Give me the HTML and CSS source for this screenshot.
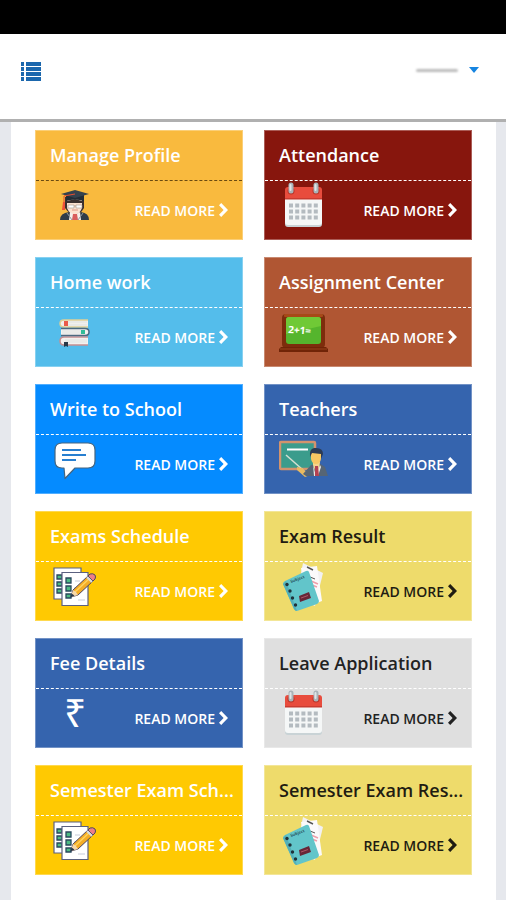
FILE: index.html
```html
<!doctype html>
<html lang="en">

<head>
    <meta charset="utf-8">
    <meta name="viewport" content="width=device-width, initial-scale=1">
    <title>School Dashboard</title>
    <link rel="stylesheet" href="styles.css">
</head>

<body>
    <!-- shared icons -->
    <svg class="sprite" aria-hidden="true">
        <symbol id="chevron" viewBox="0 0 9 14">
            <path d="M0 2.3 2.2 0 9 7 2.2 14 0 11.7 4.6 7z" fill="currentColor"/>
        </symbol>
        <symbol id="calendar" viewBox="0 0 50 50">
            <rect x="6" y="9" width="37" height="37" rx="3" fill="#c9d3d6"/>
            <rect x="6" y="9" width="37" height="35" rx="3" fill="#f5f7f7"/>
            <path d="M6 18V9q0-3 3-3h31q3 0 3 3v9z" fill="#e84c3d"/>
            <path d="M6 17h37v1.500H6z" fill="#c93c31"/>
            <circle cx="12" cy="10" r="3.500" fill="#b93429"/>
            <circle cx="37" cy="10" r="3.500" fill="#b93429"/>
            <path d="M12 4v6M37 4v6" stroke="#a9b3b8" stroke-width="5" stroke-linecap="round"/>
            <path d="M11.500 4v5M36.500 4v5" stroke="#dfe5e7" stroke-width="2" stroke-linecap="round"/>
            <g stroke="#b4bbc0" stroke-width="4" stroke-dasharray="4 2.200">
                <path d="M10 24.500h29M10 30.500h29M10 36.500h29"/>
            </g>
        </symbol>
        <symbol id="checklist" viewBox="0 0 50 50">
            <path d="M4 6h27v31H4z" fill="#fff" stroke="#5b6180" stroke-width="1.200"/>
            <g fill="#4dbb83" stroke="#28485c" stroke-width="1.300">
                <path d="M7 13h5v4H7zM7 20h5v4H7zM7 27h5v4H7z"/>
            </g>
            <path d="M12 10.500h26v33H12z" fill="#fff" stroke="#5b6180" stroke-width="1.200"/>
            <g fill="#4dbb83" stroke="#28485c" stroke-width="1.300">
                <path d="M16 16h5v5h-5zM16 24h5v5h-5zM16 32h5v4h-5z"/>
            </g>
            <path d="M25 19h5M24 26h4M28 38h7" stroke="#c7cbd8"/>
            <path d="M21 35l2-7L38 14l5 5-15 14z" fill="#f5ad25" stroke="#4d4660"/>
            <path d="M25 30 40 16" stroke="#ffd35f" stroke-width="1.500"/>
            <path d="M38 14l2-2q3-1 5 1 1 2 0 4l-2 2z" fill="#ed7e86" stroke="#4d4660"/>
            <path d="M37 15l5 5" stroke="#d6dce5" stroke-width="2"/>
            <path d="M21 35l2-7q3 1 5 5z" fill="#f8d8a8"/>
            <path d="M20.500 35.500l1-4 3 2z" fill="#26364c"/>
        </symbol>
        <symbol id="notebook" viewBox="0 0 50 50">
            <path d="M24 1l20 10-8 33-19-8z" fill="#f2f1f3"/>
            <path d="M22 6l16-2 5 35-13 5z" fill="#fbfafb"/>
            <path d="M28 5l6 3" stroke="#555" stroke-width="1.500"/>
            <path d="M31 15l5 2" stroke="#555"/>
            <path d="M32 19l7 3M33 23l5 2" stroke="#ee9da9" stroke-width="1.500"/>
            <path d="M6 19 27 9q2-1 3 1l10 29q0 2-2 3l-20 7q-2 0-3-2L4 22q0-2 2-3z" fill="#62c5ca"/>
            <path d="M4 22l3-3 11 30q-2 0-3-2z" fill="#53b0b8"/>
            <text class="notebook-label" x="12" y="21" transform="rotate(-20 12 21)">Subject</text>
            <path d="M20 34l10-4 2 6-11 4z" fill="#682537"/>
            <path d="M22 36l7-2.500" stroke="#ad5567"/>
            <g fill="#20323a">
                <circle cx="8" cy="22.500" r="1.700"/>
                <circle cx="11" cy="29" r="1.700"/>
                <circle cx="13.500" cy="36" r="1.700"/>
                <circle cx="16.500" cy="43" r="1.700"/>
            </g>
        </symbol>
    </svg>

    <div class="statusbar"></div>

    <header class="topbar">
        <button type="button" class="menu-button" aria-label="Menu">
            <svg width="20" height="19" viewBox="0 0 20 19">
                <path d="M0 0h3v4H0zM5 0h15v4H5zM0 5h3v4H0zM5 5h15v4H5zM0 10h3v4H0zM5 10h15v4H5zM0 15h3v4H0zM5 15h15v4H5z" fill="#1b67ad"/>
            </svg>
        </button>
        <button type="button" class="user-button" aria-label="Account">
            <span class="user-name"></span>
            <svg width="10" height="6" viewBox="0 0 10 6"><path d="M0 0h10L5 6z" fill="#1684e0"/></svg>
        </button>
    </header>

    <main class="panel">
        <section class="card profile">
            <h2>Manage Profile</h2>
            <div class="card-foot">
                <svg class="icon" viewBox="0 0 50 50">
                    <path d="M15 16h19v11q-4 7-9 7t-10-7z" fill="#3b302f"/>
                    <path d="M17 19q8-4 15 0v8q-3 7-7.500 7T17 27z" fill="#fbe1cf"/>
                    <path d="M17 20l8-2 7 2v2H17z" fill="#3b302f"/>
                    <path d="M18 24h6v3h-6zM26 24h6v3h-6zM24 25h2" fill="#fff" stroke="#a5948c" stroke-width=".6"/>
                    <path d="M22 29h6" stroke="#de9785"/>
                    <path d="M10 39q0-7 9-8l6 4 6-4q8 1 8 8z" fill="#303d49"/>
                    <path d="M20 31l5 3 5-3 1 8H19z" fill="#f6eee9"/>
                    <path d="M23 33h4l1 6h-6z" fill="#d95d5d"/>
                    <path d="M17 32l5 7M33 32l-5 7" stroke="#8f989f"/>
                    <path d="M16 13h18v7q-9-3-18 0z" fill="#222d36"/>
                    <path d="M11 13l14-4 14 4-14 4z" fill="#34424e"/>
                    <path d="M25 13l-11 2v8" fill="none" stroke="#e54e32"/>
                    <path d="M13 21h2v8h-3z" fill="#ef5138"/>
                </svg>
                <a href="#">READ MORE <svg class="chevron"><use href="#chevron"/></svg></a>
            </div>
        </section>

        <section class="card attendance">
            <h2>Attendance</h2>
            <div class="card-foot">
                <svg class="icon"><use href="#calendar"/></svg>
                <a href="#">READ MORE <svg class="chevron"><use href="#chevron"/></svg></a>
            </div>
        </section>

        <section class="card homework">
            <h2>Home work</h2>
            <div class="card-foot">
                <svg class="icon" viewBox="0 0 50 50">
                    <path d="M38 12H14q-4 0-4 3.500t4 3.500h24" fill="#f1f0ed" stroke="#dfcf96" stroke-width="1.500"/>
                    <path d="M15 14h22M15 17h22" stroke="#d9dfe0" stroke-width=".7"/>
                    <path d="M14 13h4v5h-4z" fill="#eb5b49"/>
                    <path d="M11 20.500h24q4 0 4 3.500t-4 3.500H11" fill="#f3f1ef" stroke="#4c6a80" stroke-width="1.500"/>
                    <path d="M12 23h20M12 25h20" stroke="#d9dfe0" stroke-width=".7"/>
                    <path d="M31 22h4v4h-4z" fill="#32bc98"/>
                    <path d="M38 29H14q-4 0-4 4t4 4h24" fill="#f3f1ef" stroke="#c58e91" stroke-width="1.500"/>
                    <path d="M15 32h22M15 34h22" stroke="#d9dfe0" stroke-width=".7"/>
                    <path d="M14 34h4v5l-2-1-2 1z" fill="#293949"/>
                </svg>
                <a href="#">READ MORE <svg class="chevron"><use href="#chevron"/></svg></a>
            </div>
        </section>

        <section class="card assignment">
            <h2>Assignment Center</h2>
            <div class="card-foot">
                <svg class="icon" viewBox="0 0 50 50">
                    <rect x="3" y="6" width="43" height="34" rx="4" fill="#7d2d0c"/>
                    <rect x="5" y="6" width="39" height="3" rx="1" fill="#a64a18"/>
                    <rect x="7" y="9" width="35" height="27" rx="3" fill="#55b52d"/>
                    <path d="M7 26V12q0-3 3-3h29q3 0 3 3v6z" fill="#70c936"/>
                    <text class="board-text" x="9" y="25" transform="rotate(4 9 25)">2+1=</text>
                    <path d="M2 39h45l2 2v3H0v-3z" fill="#702407"/>
                    <path d="M1 41h47" stroke="#98421c"/>
                </svg>
                <a href="#">READ MORE <svg class="chevron"><use href="#chevron"/></svg></a>
            </div>
        </section>

        <section class="card write">
            <h2>Write to School</h2>
            <div class="card-foot">
                <svg class="icon" viewBox="0 0 50 50">
                    <path d="M12 8h26q7 0 7 7v11q0 7-7 7H25L15 43.500 14 33h-2q-7 0-7-7V15q0-7 7-7z" fill="#fff" stroke="#46657f" stroke-width="1.200" stroke-linejoin="round"/>
                    <path d="M12 15h19M12 20h24M12 25h14" stroke="#287fd0" stroke-width="2"/>
                </svg>
                <a href="#">READ MORE <svg class="chevron"><use href="#chevron"/></svg></a>
            </div>
        </section>

        <section class="card teachers">
            <h2>Teachers</h2>
            <div class="card-foot">
                <svg class="icon" viewBox="0 0 50 50">
                    <rect x="1" y="7" width="35" height="27" rx="1" fill="#3b9c8c" stroke="#d3936d" stroke-width="2.500"/>
                    <path d="M8 14.500h21" stroke="#fff" stroke-width="2"/>
                    <path d="M7 20l17 15" stroke="#d5e0d2" stroke-width="1.500"/>
                    <path d="M18 32l5 1 8 7-5 2-8-7z" fill="#e9ba61"/>
                    <path d="M24 39l8-9 8-2 6 4 3 9H27z" fill="#566575"/>
                    <path d="M34 27h7l-1 8-3 3-3-8z" fill="#f4d58b"/>
                    <path d="M34 30l3 11 4-11 1 2-3 9h-4z" fill="#e7e9e8"/>
                    <path d="M36 31h3l1 10h-4z" fill="#b44151"/>
                    <path d="M32 18q5-5 10 0v6q-1 5-5 5t-5-5z" fill="#f7c763"/>
                    <path d="M31 22q-1-8 4-9 9-1 9 6l-2 5v-5l-9-1z" fill="#2c3b55"/>
                </svg>
                <a href="#">READ MORE <svg class="chevron"><use href="#chevron"/></svg></a>
            </div>
        </section>

        <section class="card schedule">
            <h2>Exams Schedule</h2>
            <div class="card-foot">
                <svg class="icon"><use href="#checklist"/></svg>
                <a href="#">READ MORE <svg class="chevron"><use href="#chevron"/></svg></a>
            </div>
        </section>

        <section class="card result">
            <h2>Exam Result</h2>
            <div class="card-foot">
                <svg class="icon"><use href="#notebook"/></svg>
                <a href="#">READ MORE <svg class="chevron"><use href="#chevron"/></svg></a>
            </div>
        </section>

        <section class="card fee">
            <h2>Fee Details</h2>
            <div class="card-foot">
                <span class="icon rupee">&#8377;</span>
                <a href="#">READ MORE <svg class="chevron"><use href="#chevron"/></svg></a>
            </div>
        </section>

        <section class="card leave">
            <h2>Leave Application</h2>
            <div class="card-foot">
                <svg class="icon"><use href="#calendar"/></svg>
                <a href="#">READ MORE <svg class="chevron"><use href="#chevron"/></svg></a>
            </div>
        </section>

        <section class="card schedule">
            <h2>Semester Exam Sch...</h2>
            <div class="card-foot">
                <svg class="icon"><use href="#checklist"/></svg>
                <a href="#">READ MORE <svg class="chevron"><use href="#chevron"/></svg></a>
            </div>
        </section>

        <section class="card result">
            <h2>Semester Exam Res...</h2>
            <div class="card-foot">
                <svg class="icon"><use href="#notebook"/></svg>
                <a href="#">READ MORE <svg class="chevron"><use href="#chevron"/></svg></a>
            </div>
        </section>
    </main>
</body>

</html>
```

FILE: styles.css
```css
* {
    box-sizing: border-box;
}

body {
    margin: 0;
    min-height: 100vh;
    display: flex;
    flex-direction: column;
    background-color: #e6e8ed;
    font-family: "Open Sans", sans-serif;
}

.sprite {
    display: none;
}

.statusbar {
    height: 34px;
    background-color: #000;
}

.topbar {
    display: flex;
    justify-content: space-between;
    align-items: flex-start;
    height: 88px;
    padding: 28px 27px 0 21px;
    background-color: #fff;
    border-bottom: 3px solid #b0b0b0;
}

.menu-button,
.user-button {
    display: flex;
    align-items: center;
    padding: 0;
    border: none;
    background: none;
    cursor: pointer;
}

.user-button {
    gap: 11px;
    height: 16px;
}

.user-name {
    width: 42px;
    height: 3px;
    border-radius: 2px;
    background-color: #bbb;
    filter: blur(1px);
}

.panel {
    flex: 1;
    display: grid;
    grid-template-columns: 1fr 1fr;
    align-content: start;
    gap: 17px 21px;
    margin: 0 10px 0 11px;
    padding: 8px 24px 24px;
    background-color: #fff;
}

.card {
    min-width: 0;
    height: 110px;
    border: 1px solid rgba(255, 255, 255, 0.3);
    color: #fff;
}

.card h2 {
    margin: 0;
    height: 50px;
    padding: 0 4px 0 14px;
    border-bottom: 1px dashed #fff;
    font-size: 18px;
    font-weight: 600;
    line-height: 48px;
    white-space: nowrap;
    overflow: hidden;
    text-overflow: ellipsis;
}

.card-foot {
    display: flex;
    justify-content: space-between;
    padding: 0 14px;
}

.card-foot a {
    display: flex;
    align-items: center;
    gap: 4px;
    height: 58px;
    color: inherit;
    font-size: 14px;
    font-weight: 600;
    text-decoration: none;
}

.icon {
    width: 50px;
    height: 50px;
}

.chevron {
    width: 9px;
    height: 14px;
}

.rupee {
    font-size: 39px;
    line-height: 46px;
    text-align: center;
}

.board-text {
    fill: #fff;
    font-size: 10px;
    font-weight: 700;
}

.notebook-label {
    fill: #28535a;
    font-size: 4px;
    font-weight: 700;
}

/* card colours */
.profile { background-color: #f9ba3e; }
.profile h2 { border-bottom-color: #6b4a10; }
.attendance { background-color: #87160d; }
.homework { background-color: #54bdeb; }
.assignment { background-color: #b05633; }
.write { background-color: #058bff; }
.teachers,
.fee { background-color: #3564ae; }
.schedule { background-color: #ffc902; }

.result {
    background-color: #eedb6b;
    color: #1f1c12;
}

.leave {
    background-color: #dfdfdf;
    color: #222;
}
```
